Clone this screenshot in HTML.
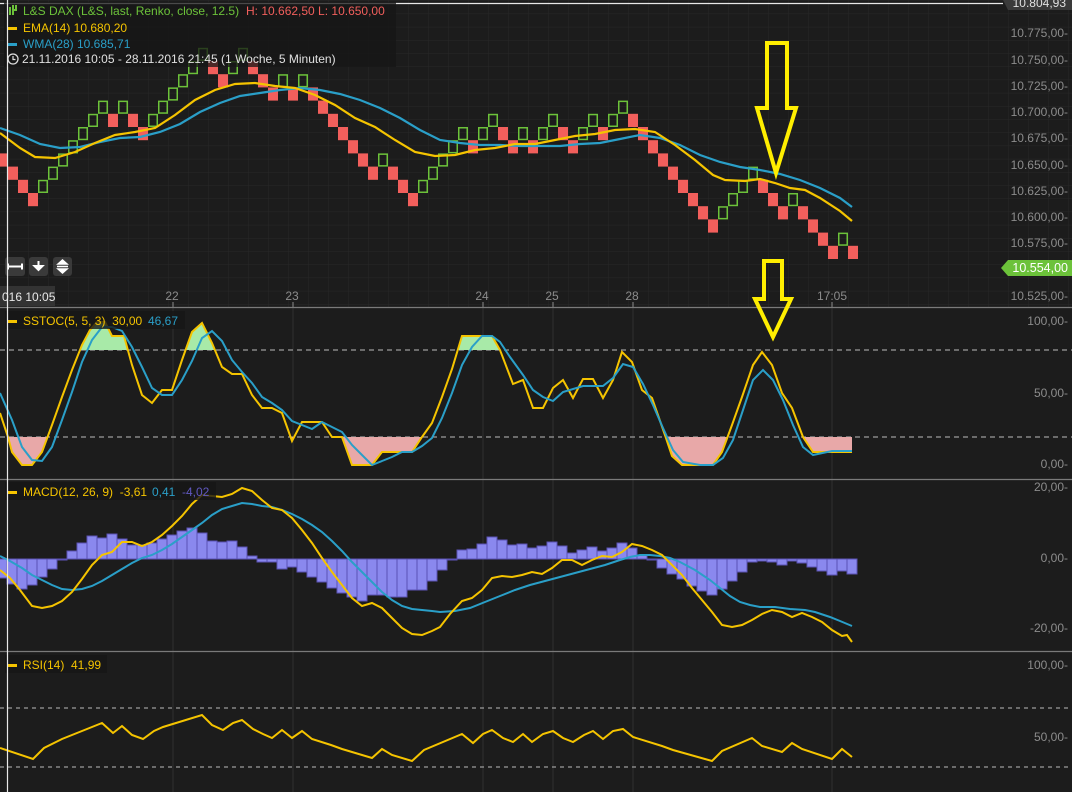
<!DOCTYPE html>
<html><head><meta charset="utf-8"><style>
html,body{margin:0;padding:0;background:#1c1c1c;}
body{width:1072px;height:792px;overflow:hidden;position:relative;font-family:"Liberation Sans",sans-serif;}
svg{position:absolute;left:0;top:0;}
.ax{font-size:12px;fill:#8c8c8c;text-anchor:end;}
.t{font-size:12px;white-space:pre;}
</style></head><body>
<svg width="1072" height="792" viewBox="0 0 1072 792">
<defs>
<pattern id="g" x="8" y="0.4" width="20" height="13.2" patternUnits="userSpaceOnUse">
<path d="M0 0V13.2M0 0H20" stroke="#282828" stroke-width="1" fill="none"/>
</pattern>
<clipPath id="top80"><rect x="0" y="300" width="1000" height="50"/></clipPath>
<clipPath id="bot20"><rect x="0" y="437" width="1000" height="40"/></clipPath>
</defs>
<rect x="0" y="0" width="1072" height="307" fill="url(#g)"/>

<g stroke="#303030" stroke-width="1">
<path d="M173 308V792M293 308V792M483 308V792M553 308V792M633 308V792M832 308V792"/>
</g>

<g fill="#f25f5c">
<rect x="-2" y="153.4" width="10" height="13.2"/>
<rect x="8" y="166.6" width="10" height="13.2"/>
<rect x="18" y="179.8" width="10" height="13.2"/>
<rect x="28" y="193" width="10" height="13.2"/>
<rect x="108" y="113.8" width="10" height="13.2"/>
<rect x="128" y="113.8" width="10" height="13.2"/>
<rect x="138" y="127" width="10" height="13.2"/>
<rect x="208" y="61" width="10" height="13.2"/>
<rect x="218" y="74.2" width="10" height="13.2"/>
<rect x="248" y="61" width="10" height="13.2"/>
<rect x="258" y="74.2" width="10" height="13.2"/>
<rect x="268" y="87.4" width="10" height="13.2"/>
<rect x="288" y="87.4" width="10" height="13.2"/>
<rect x="308" y="87.4" width="10" height="13.2"/>
<rect x="318" y="100.6" width="10" height="13.2"/>
<rect x="328" y="113.8" width="10" height="13.2"/>
<rect x="338" y="127" width="10" height="13.2"/>
<rect x="348" y="140.2" width="10" height="13.2"/>
<rect x="358" y="153.4" width="10" height="13.2"/>
<rect x="368" y="166.6" width="10" height="13.2"/>
<rect x="388" y="166.6" width="10" height="13.2"/>
<rect x="398" y="179.8" width="10" height="13.2"/>
<rect x="408" y="193" width="10" height="13.2"/>
<rect x="468" y="140.2" width="10" height="13.2"/>
<rect x="498" y="127" width="10" height="13.2"/>
<rect x="508" y="140.2" width="10" height="13.2"/>
<rect x="528" y="140.2" width="10" height="13.2"/>
<rect x="558" y="127" width="10" height="13.2"/>
<rect x="568" y="140.2" width="10" height="13.2"/>
<rect x="598" y="127" width="10" height="13.2"/>
<rect x="628" y="113.8" width="10" height="13.2"/>
<rect x="638" y="127" width="10" height="13.2"/>
<rect x="648" y="140.2" width="10" height="13.2"/>
<rect x="658" y="153.4" width="10" height="13.2"/>
<rect x="668" y="166.6" width="10" height="13.2"/>
<rect x="678" y="179.8" width="10" height="13.2"/>
<rect x="688" y="193" width="10" height="13.2"/>
<rect x="698" y="206.2" width="10" height="13.2"/>
<rect x="708" y="219.4" width="10" height="13.2"/>
<rect x="758" y="179.8" width="10" height="13.2"/>
<rect x="768" y="193" width="10" height="13.2"/>
<rect x="778" y="206.2" width="10" height="13.2"/>
<rect x="798" y="206.2" width="10" height="13.2"/>
<rect x="808" y="219.4" width="10" height="13.2"/>
<rect x="818" y="232.6" width="10" height="13.2"/>
<rect x="828" y="245.8" width="10" height="13.2"/>
<rect x="848" y="245.8" width="10" height="13.2"/>
</g>
<g fill="none" stroke="#6cc23a" stroke-width="1.5">
<rect x="38.75" y="180.55" width="8.5" height="11.7"/>
<rect x="48.75" y="167.35" width="8.5" height="11.7"/>
<rect x="58.75" y="154.15" width="8.5" height="11.7"/>
<rect x="68.75" y="140.95" width="8.5" height="11.7"/>
<rect x="78.75" y="127.75" width="8.5" height="11.7"/>
<rect x="88.75" y="114.55" width="8.5" height="11.7"/>
<rect x="98.75" y="101.35" width="8.5" height="11.7"/>
<rect x="118.75" y="101.35" width="8.5" height="11.7"/>
<rect x="148.75" y="114.55" width="8.5" height="11.7"/>
<rect x="158.75" y="101.35" width="8.5" height="11.7"/>
<rect x="168.75" y="88.15" width="8.5" height="11.7"/>
<rect x="178.75" y="74.95" width="8.5" height="11.7"/>
<rect x="188.75" y="61.75" width="8.5" height="11.7"/>
<rect x="198.75" y="48.55" width="8.5" height="11.7"/>
<rect x="228.75" y="61.75" width="8.5" height="11.7"/>
<rect x="238.75" y="48.55" width="8.5" height="11.7"/>
<rect x="278.75" y="74.95" width="8.5" height="11.7"/>
<rect x="298.75" y="74.95" width="8.5" height="11.7"/>
<rect x="378.75" y="154.15" width="8.5" height="11.7"/>
<rect x="418.75" y="180.55" width="8.5" height="11.7"/>
<rect x="428.75" y="167.35" width="8.5" height="11.7"/>
<rect x="438.75" y="154.15" width="8.5" height="11.7"/>
<rect x="448.75" y="140.95" width="8.5" height="11.7"/>
<rect x="458.75" y="127.75" width="8.5" height="11.7"/>
<rect x="478.75" y="127.75" width="8.5" height="11.7"/>
<rect x="488.75" y="114.55" width="8.5" height="11.7"/>
<rect x="518.75" y="127.75" width="8.5" height="11.7"/>
<rect x="538.75" y="127.75" width="8.5" height="11.7"/>
<rect x="548.75" y="114.55" width="8.5" height="11.7"/>
<rect x="578.75" y="127.75" width="8.5" height="11.7"/>
<rect x="588.75" y="114.55" width="8.5" height="11.7"/>
<rect x="608.75" y="114.55" width="8.5" height="11.7"/>
<rect x="618.75" y="101.35" width="8.5" height="11.7"/>
<rect x="718.75" y="206.95" width="8.5" height="11.7"/>
<rect x="728.75" y="193.75" width="8.5" height="11.7"/>
<rect x="738.75" y="180.55" width="8.5" height="11.7"/>
<rect x="748.75" y="167.35" width="8.5" height="11.7"/>
<rect x="788.75" y="193.75" width="8.5" height="11.7"/>
<rect x="838.75" y="233.35" width="8.5" height="11.7"/>
</g>
<polyline fill="none" stroke="#2a9fc8" stroke-width="2.2" points="0,128 20,135 40,144 60,148 80,147 100,142 120,138 140,137 160,132 180,124 200,112 220,103 240,96 260,93 280,90 300,88 320,90 340,94 360,100 380,108 400,118 420,130 440,140 460,143 480,145 500,145 520,146 540,146 560,146 580,144 600,143 620,139 640,135 660,138 680,145 700,155 720,162 740,167 760,170 780,174 800,180 820,188 840,198 852,207"/>
<polyline fill="none" stroke="#f5c400" stroke-width="2.2" points="0,133 20,148 35,157 55,158 75,152 95,143 115,135 135,132 155,128 175,115 195,100 215,90 235,84 255,83 275,86 295,88 315,95 335,105 355,118 375,127 395,140 415,152 435,156 455,155 475,150 495,148 515,144 535,144 555,140 575,136 595,134 615,130 635,129 655,132 675,145 695,160 713,175 725,180 745,181 760,179 775,183 790,188 805,190 820,198 840,211 852,221"/>

<path d="M0 3.5H1003" stroke="#e8e8e8" stroke-width="1.2"/>
<path d="M1003 0H1072V10H1008Z" fill="#3a3a3a"/>
<text x="1066" y="7" class="ax" style="fill:#e0e0e0">10.804,93</text>

<rect x="4" y="2" width="392" height="65" fill="#161616" opacity="0.75"/>
<g class="t">
<path d="M9 7h2v8h-2zM12 5h2v10h-2zM12 9h5v2h-5zM15 5h2v6h-2z" fill="#6cc23a"/>
<text x="23" y="15" fill="#6cc23a">L&amp;S DAX (L&amp;S, last, Renko, close, 12.5)</text>
<text x="246" y="15" fill="#f25f5c">H: 10.662,50  L: 10.650,00</text>
<rect x="8" y="27" width="9" height="3" fill="#f5c400"/>
<text x="23" y="32" fill="#f5c400">EMA(14)  10.680,20</text>
<rect x="8" y="43" width="9" height="3" fill="#2a9fc8"/>
<text x="23" y="48" fill="#2a9fc8">WMA(28)  10.685,71</text>
<circle cx="13" cy="59" r="5" fill="none" stroke="#ddd" stroke-width="1.3"/>
<path d="M13 56v3.5h2.5" stroke="#ddd" stroke-width="1.2" fill="none"/>
<text x="22" y="63" fill="#e0e0e0">21.11.2016 10:05 - 28.11.2016 21:45   (1 Woche, 5 Minuten)</text>
</g>

<g class="ax">
<text x="1068" y="37">10.775,00-</text>
<text x="1068" y="64">10.750,00-</text>
<text x="1068" y="90">10.725,00-</text>
<text x="1068" y="116">10.700,00-</text>
<text x="1068" y="142">10.675,00-</text>
<text x="1068" y="169">10.650,00-</text>
<text x="1068" y="195">10.625,00-</text>
<text x="1068" y="221">10.600,00-</text>
<text x="1068" y="247">10.575,00-</text>
<text x="1068" y="300">10.525,00-</text>
</g>
<path d="M1001 268L1008 260H1072V276H1008Z" fill="#6cc23a"/>
<text x="1068" y="272" class="ax" style="fill:#fff;font-size:12.5px">10.554,00</text>

<rect x="5" y="257" width="20" height="19" rx="3" fill="#3a3a3a"/>
<rect x="29" y="257" width="19" height="19" rx="3" fill="#3a3a3a"/>
<rect x="53" y="257" width="19" height="19" rx="3" fill="#3a3a3a"/>
<path d="M8 266.5h14M8 263.5v6M22 263.5v6" stroke="#fff" stroke-width="2" fill="none"/>
<path d="M38.5 261v7M34.5 266l4 4 4-4z" stroke="#fff" stroke-width="2" fill="#fff"/>
<path d="M58 264l4.5-4 4.5 4zM58 269l4.5 4 4.5-4zM57 266.5h11" fill="#fff" stroke="#fff" stroke-width="1.5"/>

<rect x="0" y="286" width="55" height="20" fill="#333"/>
<text x="2" y="301" class="t" fill="#e8e8e8">016 10:05</text>
<g class="t" fill="#8c8c8c" text-anchor="middle">
<text x="172" y="300">22</text><text x="292" y="300">23</text><text x="482" y="300">24</text>
<text x="552" y="300">25</text><text x="632" y="300">28</text><text x="832" y="300">17:05</text>
</g>
<path d="M173 302v5M293 302v5M483 302v5M553 302v5M633 302v5M832 302v5" stroke="#8c8c8c"/>

<path d="M0 307.5H1072M0 479.5H1072M0 651.5H1072" stroke="#7a7a7a" stroke-width="1.2"/>

<path d="M0 350H1072M0 437H1072" stroke="#bbb" stroke-width="1" stroke-dasharray="5,4"/>
<g clip-path="url(#top80)"><polygon fill="#a8eaa8" points="0,350 0,413 8,437 12,452 22,465 32,465 42,452 52,425 62,397 72,370 82,345 90,330 97,322 105,322 112,336 124,336 132,365 142,395 152,403 162,390 172,390 182,360 192,332 202,323 212,343 222,367 232,374 242,374 252,395 262,408 272,408 282,413 292,441 302,422 322,422 332,437 342,437 352,465 372,465 382,452 412,452 422,437 432,423 442,397 452,369 462,336 492,336 500,350 852,350"/></g>
<g clip-path="url(#bot20)"><polygon fill="#e8a8a8" points="0,437 0,413 8,437 12,452 22,465 32,465 42,452 52,425 62,397 72,370 82,345 90,330 97,322 105,322 112,336 124,336 132,365 142,395 152,403 162,390 172,390 182,360 192,332 202,323 212,343 222,367 232,374 242,374 252,395 262,408 272,408 282,413 292,441 302,422 322,422 332,437 342,437 352,465 372,465 382,452 412,452 422,437 432,423 442,397 452,369 462,336 492,336 500,350 513,384 523,380 533,408 543,408 553,388 563,380 573,398 583,379 593,379 603,398 613,380 622,352 632,362 642,390 652,398 666,438 672,456 682,465 713,465 722,452 732,425 742,397 753,365 762,352 772,365 782,393 792,408 803,437 813,452 852,452 852,437"/></g>
<polyline fill="none" stroke="#f5c400" stroke-width="2" points="0,413 8,437 12,452 22,465 32,465 42,452 52,425 62,397 72,370 82,345 90,330 97,322 105,322 112,336 124,336 132,365 142,395 152,403 162,390 172,390 182,360 192,332 202,323 212,343 222,367 232,374 242,374 252,395 262,408 272,408 282,413 292,441 302,422 322,422 332,437 342,437 352,465 372,465 382,452 412,452 422,437 432,423 442,397 452,369 462,336 492,336 500,350 513,384 523,380 533,408 543,408 553,388 563,380 573,398 583,379 593,379 603,398 613,380 622,352 632,362 642,390 652,398 666,438 672,456 682,465 713,465 722,452 732,425 742,397 753,365 762,352 772,365 782,393 792,408 803,437 813,452 852,452"/>
<polyline fill="none" stroke="#2a9fc8" stroke-width="2" points="0,393 12,420 22,447 32,460 42,461 52,447 62,420 72,392 82,362 92,340 102,327 112,327 122,331 132,347 142,367 152,388 162,395 172,395 182,380 192,361 202,338 212,331 222,341 232,360 242,372 252,383 262,397 272,403 282,410 292,421 302,425 312,429 322,422 342,432 352,445 362,455 372,465 382,461 392,457 402,452 412,452 422,446 432,438 442,418 452,393 462,365 472,347 482,336 492,336 500,342 510,357 523,375 533,390 543,397 553,401 563,392 583,386 603,386 613,378 623,364 633,367 643,384 653,405 663,428 673,450 683,462 700,465 713,465 723,458 733,440 743,410 753,380 763,370 773,380 783,400 793,425 803,447 813,455 832,451 852,451"/>
<rect x="5" y="311" width="180" height="18" fill="#161616" opacity="0.8"/>
<rect x="8" y="320" width="9" height="3" fill="#f5c400"/>
<text x="23" y="325" class="t" fill="#f5c400">SSTOC(5, 5, 3)  30,00</text>
<text x="148" y="325" class="t" fill="#2a9fc8">46,67</text>
<g class="ax"><text x="1068" y="325">100,00-</text><text x="1068" y="397">50,00-</text><text x="1068" y="468">0,00-</text></g>

<g fill="#8a88ee" stroke="#5b52b5" stroke-width="1">
<rect x="-3" y="559" width="10" height="19"/><rect x="7" y="559" width="10" height="25"/><rect x="17" y="559" width="10" height="30"/><rect x="27" y="559" width="10" height="26"/><rect x="37" y="559" width="10" height="18"/><rect x="47" y="559" width="10" height="10"/><rect x="57" y="559" width="10" height="1"/>
<rect x="67" y="551" width="10" height="8"/><rect x="77" y="543" width="10" height="16"/><rect x="87" y="536" width="10" height="23"/><rect x="97" y="538" width="10" height="21"/><rect x="107" y="534" width="10" height="25"/><rect x="117" y="539" width="10" height="20"/><rect x="127" y="545" width="10" height="14"/><rect x="137" y="545" width="10" height="14"/><rect x="147" y="543" width="10" height="16"/><rect x="157" y="539" width="10" height="20"/><rect x="167" y="535" width="10" height="24"/><rect x="177" y="531" width="10" height="28"/><rect x="187" y="528" width="10" height="31"/><rect x="197" y="533" width="10" height="26"/><rect x="207" y="541" width="10" height="18"/><rect x="217" y="542" width="10" height="17"/><rect x="227" y="541" width="10" height="18"/><rect x="237" y="547" width="10" height="12"/><rect x="247" y="556" width="10" height="3"/>
<rect x="257" y="559" width="10" height="3"/><rect x="267" y="559" width="10" height="3"/><rect x="277" y="559" width="10" height="10"/><rect x="287" y="559" width="10" height="8"/><rect x="297" y="559" width="10" height="13"/><rect x="307" y="559" width="10" height="18"/><rect x="317" y="559" width="10" height="23"/><rect x="327" y="559" width="10" height="29"/><rect x="337" y="559" width="10" height="34"/><rect x="347" y="559" width="10" height="38"/><rect x="357" y="559" width="10" height="42"/><rect x="367" y="559" width="10" height="36"/><rect x="377" y="559" width="10" height="36"/><rect x="387" y="559" width="10" height="38"/><rect x="397" y="559" width="10" height="38"/><rect x="407" y="559" width="10" height="31"/><rect x="417" y="559" width="10" height="31"/><rect x="427" y="559" width="10" height="22"/><rect x="437" y="559" width="10" height="11"/><rect x="447" y="559" width="10" height="1"/>
<rect x="457" y="550" width="10" height="9"/><rect x="467" y="549" width="10" height="10"/><rect x="477" y="544" width="10" height="15"/><rect x="487" y="537" width="10" height="22"/><rect x="497" y="540" width="10" height="19"/><rect x="507" y="545" width="10" height="14"/><rect x="517" y="544" width="10" height="15"/><rect x="527" y="548" width="10" height="11"/><rect x="537" y="546" width="10" height="13"/><rect x="547" y="542" width="10" height="17"/><rect x="557" y="546" width="10" height="13"/><rect x="567" y="553" width="10" height="6"/><rect x="577" y="550" width="10" height="9"/><rect x="587" y="547" width="10" height="12"/><rect x="597" y="551" width="10" height="8"/><rect x="607" y="548" width="10" height="11"/><rect x="617" y="543" width="10" height="16"/><rect x="627" y="548" width="10" height="11"/><rect x="637" y="555" width="10" height="4"/>
<rect x="647" y="559" width="10" height="1"/><rect x="657" y="559" width="10" height="9"/><rect x="667" y="559" width="10" height="15"/><rect x="677" y="559" width="10" height="20"/><rect x="687" y="559" width="10" height="27"/><rect x="697" y="559" width="10" height="32"/><rect x="707" y="559" width="10" height="36"/><rect x="717" y="559" width="10" height="30"/><rect x="727" y="559" width="10" height="22"/><rect x="737" y="559" width="10" height="13"/><rect x="747" y="559" width="10" height="3"/><rect x="757" y="559" width="10" height="2"/><rect x="767" y="559" width="10" height="3"/><rect x="777" y="559" width="10" height="6"/><rect x="787" y="559" width="10" height="2"/><rect x="797" y="559" width="10" height="4"/><rect x="807" y="559" width="10" height="8"/><rect x="817" y="559" width="10" height="12"/><rect x="827" y="559" width="10" height="16"/><rect x="837" y="559" width="10" height="12"/><rect x="847" y="559" width="10" height="15"/>
</g>
<polyline fill="none" stroke="#2a9fc8" stroke-width="2" points="0,556 10,561 22,568 32,575 42,580 52,585 62,589 72,590 82,589 92,586 102,581 112,575 122,569 132,563 142,558 152,555 162,550 172,544 182,537 192,530 202,523 212,515 222,509 232,506 242,503 252,504 262,506 272,507 282,510 292,514 302,519 312,525 322,532 332,541 342,551 352,562 362,572 372,582 382,592 392,600 402,606 412,609 422,610 432,611 440,612 455,611 470,608 485,602 500,596 515,590 530,585 545,581 560,577 575,573 590,569 605,565 620,560 630,557 640,555 650,555 660,556 670,558 680,562 695,570 710,580 720,588 730,596 740,602 750,605 760,607 775,607 790,609 805,610 815,612 830,617 840,621 852,626"/>
<polyline fill="none" stroke="#f5c400" stroke-width="2" points="0,570 10,578 20,590 32,606 42,608 52,606 62,601 72,592 82,579 92,565 102,555 112,552 122,542 132,542 142,546 152,542 162,535 172,526 182,516 192,504 202,495 212,496 222,497 232,494 242,488 252,491 262,500 272,508 282,510 292,518 302,530 312,543 322,558 332,572 342,585 352,598 362,606 372,603 382,608 392,618 402,628 412,634 422,635 432,631 440,627 450,614 462,601 472,598 482,590 492,578 502,576 512,577 522,575 532,572 542,574 552,568 562,560 572,560 582,565 592,560 602,556 612,557 622,552 632,544 642,546 652,550 662,555 672,565 682,575 692,588 702,600 712,612 722,625 732,627 742,625 752,620 762,614 772,610 782,612 792,617 802,613 812,617 822,622 832,630 842,636 847,635 852,642"/>
<rect x="5" y="482" width="211" height="18" fill="#161616" opacity="0.8"/>
<rect x="8" y="491" width="9" height="3" fill="#f5c400"/>
<text x="23" y="496" class="t" fill="#f5c400">MACD(12, 26, 9)  -3,61</text>
<text x="152" y="496" class="t" fill="#2a9fc8">0,41</text>
<text x="182" y="496" class="t" fill="#6058c0">-4,02</text>
<g class="ax"><text x="1068" y="491">20,00-</text><text x="1068" y="562">0,00-</text><text x="1068" y="632">-20,00-</text></g>

<path d="M0 708H1072M0 767H1072" stroke="#bbb" stroke-width="1" stroke-dasharray="4,4"/>
<polyline fill="none" stroke="#f5c400" stroke-width="2" points="0,748 33,759 44,748 62,739 102,723 113,733 122,726 132,735 143,739 154,731 163,727 202,715 212,725 223,730 233,723 242,720 253,729 263,734 272,738 282,730 292,738 302,731 312,739 331,745 342,749 372,758 382,749 392,755 412,761 424,750 462,734 473,743 483,734 492,730 503,738 513,742 523,734 532,742 543,734 553,731 563,738 573,742 584,735 593,731 603,739 613,731 623,729 633,737 662,746 673,750 712,761 722,751 752,738 762,746 782,752 792,743 802,749 832,759 842,749 852,757"/>
<rect x="5" y="655" width="102" height="18" fill="#161616" opacity="0.8"/>
<rect x="8" y="664" width="9" height="3" fill="#f5c400"/>
<text x="23" y="669" class="t" fill="#f5c400">RSI(14)  41,99</text>
<g class="ax"><text x="1068" y="669">100,00-</text><text x="1068" y="741">50,00-</text></g>

<g fill="none" stroke="#ffee00" stroke-width="4" stroke-linejoin="miter">
<polygon points="767,43 787,43 787,108 796,108 776,173 757,108 767,108"/>
<polygon points="764,261 782,261 782,299 791,299 773,337 755,299 764,299"/>
</g>

<path d="M7.5 0V792" stroke="#e8e8e8" stroke-width="1.2"/>
</svg>
</body></html>
